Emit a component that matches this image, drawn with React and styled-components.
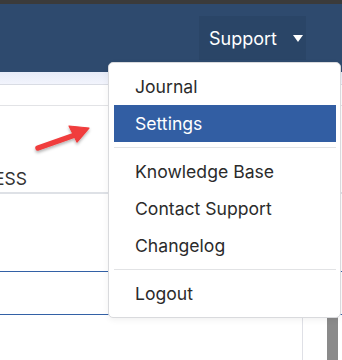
import React from "react";
import styled, { createGlobalStyle } from "styled-components";

const GlobalStyle = createGlobalStyle`
  html, body {
    margin: 0;
    padding: 0;
    background: #fff;
  }
  body {
    font-family: Inter, "Noto Sans", "Liberation Sans", sans-serif;
  }
`;

const menu = [
  { id: "journal", label: "Journal" },
  { id: "settings", label: "Settings", active: true },
  { divider: true },
  { id: "kb", label: "Knowledge Base" },
  { id: "contact", label: "Contact Support" },
  { id: "changelog", label: "Changelog" },
  { divider: true },
  { id: "logout", label: "Logout" },
];

const App = () => {
  return (
    <>
      <GlobalStyle />
      <Page>
        <TopStrip />
        <Header>
          <SupportButton>
            Support
            <Caret />
          </SupportButton>
        </Header>
        <SubBar />
        <Row height={20} />
        <HeadRow>
          <HeadCell>ESS</HeadCell>
        </HeadRow>
        <FieldRow height={77} />
        <FieldRow height={42} />
        <Footer>
          <Panel />
          <ScrollThumb />
        </Footer>

        <Dropdown>
          {menu.map((item, i) =>
            item.divider ? (
              <Divider key={"d" + i} />
            ) : (
              <MenuItem key={item.id} active={item.active}>
                {item.label}
              </MenuItem>
            )
          )}
        </Dropdown>

        <Arrow viewBox="28 118 70 38" width="70" height="38">
          <defs>
            <filter id="sh" x="-30%" y="-30%" width="160%" height="180%">
              <feDropShadow dx="0" dy="2" stdDeviation="1.6" floodColor="#000" floodOpacity="0.3" />
            </filter>
          </defs>
          <g filter="url(#sh)" fill="#f03c3c" stroke="#f03c3c">
            <line x1="38" y1="148" x2="75" y2="135" strokeWidth="5.5" strokeLinecap="round" />
            <polygon points="69,126 89,128 77,142" strokeWidth="1.2" strokeLinejoin="round" />
          </g>
        </Arrow>
      </Page>
    </>
  );
};

const Page = styled.div`
  position: relative;
  width: 342px;
  height: 360px;
  overflow: hidden;
  display: flex;
  flex-direction: column;
`;

const TopStrip = styled.div`
  height: 4px;
  background: #3b3b3b;
  flex-shrink: 0;
`;

const Header = styled.div`
  height: 68px;
  flex-shrink: 0;
  background: #2e4a6e;
  display: flex;
  align-items: center;
  justify-content: flex-end;
  padding-right: 36px;
`;

const SupportButton = styled.div`
  width: 107px;
  height: 44px;
  box-sizing: border-box;
  padding-left: 10px;
  background: #2a4567;
  color: #fff;
  font-size: 18px;
  display: flex;
  align-items: center;
`;

const Caret = styled.span`
  width: 0;
  height: 0;
  margin-left: 16px;
  border-left: 5px solid transparent;
  border-right: 5px solid transparent;
  border-top: 7px solid #fff;
`;

const SubBar = styled.div`
  height: 12px;
  flex-shrink: 0;
  background: linear-gradient(#e6ebf7, #f2f4fc);
  border-bottom: 1px solid #d9dce4;
`;

const Row = styled.div`
  height: ${(p) => p.height}px;
  flex-shrink: 0;
  border-bottom: 1px solid #e2e3e6;
`;

const HeadRow = styled.div`
  height: 86px;
  flex-shrink: 0;
  border-bottom: 2px solid #dee1e6;
  display: flex;
  align-items: flex-end;
  overflow: hidden;
`;

const HeadCell = styled.div`
  margin-left: -6px;
  padding-bottom: 3px;
  font-size: 17.5px;
  color: #333;
`;

const FieldRow = styled.div`
  height: ${(p) => p.height}px;
  flex-shrink: 0;
  border-bottom: 1px solid #3361a6;
`;

const Footer = styled.div`
  flex: 1;
  display: flex;
`;

const Panel = styled.div`
  width: 302px;
  border-right: 1px solid #dfe0e6;
`;

const ScrollThumb = styled.div`
  width: 11px;
  margin-left: 24px;
  background: #8a8a8a;
`;

const Dropdown = styled.div`
  position: absolute;
  left: 108px;
  top: 62px;
  width: 233px;
  box-sizing: border-box;
  padding: 5px 4px 5px 5px;
  background: #fff;
  border: 1px solid #d9dadd;
  border-radius: 5px;
  box-shadow: 0 2px 6px rgba(0, 0, 0, 0.06);
`;

const MenuItem = styled.div`
  height: 37px;
  padding-left: 21px;
  display: flex;
  align-items: center;
  font-size: 17.6px;
  color: ${(p) => (p.active ? "#fff" : "#2b2b2b")};
  background: ${(p) => (p.active ? "#325ea3" : "transparent")};
`;

const Divider = styled.div`
  height: 1px;
  margin: 5px 0;
  background: #e2e3e5;
`;

const Arrow = styled.svg`
  position: absolute;
  left: 28px;
  top: 118px;
  overflow: visible;
`;

export default App;
